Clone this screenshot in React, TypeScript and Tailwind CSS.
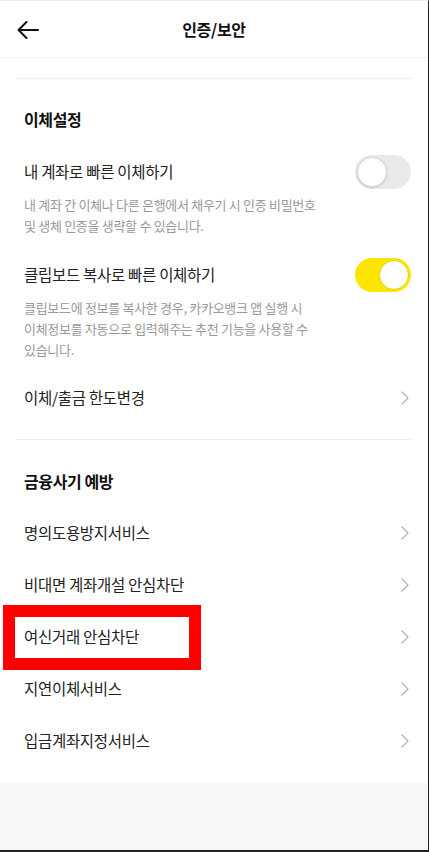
import React, { useState } from 'react';

const font = { fontFamily: '"Noto Sans CJK KR", "Noto Sans", sans-serif' };

function Toggle({ on, onChange }: { on: boolean; onChange: () => void }) {
  return (
    <button
      onClick={onChange}
      className={`relative w-[56px] h-[34px] rounded-full shrink-0 transition-colors ${
        on ? 'bg-[#fee500]' : 'bg-[#e9e9e9]'
      }`}
    >
      <span
        className={`absolute top-[2px] w-[30px] h-[30px] rounded-full bg-white border transition-all ${
          on ? 'left-[24px] border-[#e8cf00]' : 'left-[2px] border-[#d8d8d8] shadow-[0_1px_2px_rgba(0,0,0,0.15)]'
        }`}
      />
    </button>
  );
}

function Chevron() {
  return (
    <svg width="8" height="14" viewBox="0 0 8 14" fill="none" className="shrink-0">
      <path d="M1 1l6 6-6 6" stroke="#b4b4b4" strokeWidth="1.3" strokeLinecap="round" strokeLinejoin="round" />
    </svg>
  );
}

function LinkRow({ label, boxed }: { label: string; boxed?: boolean }) {
  return (
    <div className="relative h-[52px] flex items-center justify-between pl-6 pr-[19px]">
      {boxed && (
        <div className="absolute left-[3px] -top-[6px] w-[198px] h-[65px] border-[12px] border-[#ff0000]" />
      )}
      <span className="text-[15.5px] text-[#222] tracking-[-0.3px]">{label}</span>
      <Chevron />
    </div>
  );
}

export default function App() {
  const [fastMine, setFastMine] = useState(false);
  const [clipboard, setClipboard] = useState(true);

  return (
    <div style={font} className="w-[429px] h-[852px] bg-white flex flex-col border-r border-[#222] border-b-2 border-t border-t-[#eeeeee] overflow-hidden">
      {/* header */}
      <div className="h-[57px] shrink-0 relative flex items-center justify-center border-b border-[#f2f2f2]">
        <svg width="22" height="18" viewBox="0 0 22 18" fill="none" className="absolute left-[17px] top-[20px]">
          <path d="M21 9H1.5M9.5 1L1.5 9l8 8" stroke="#111" strokeWidth="2" strokeLinecap="round" strokeLinejoin="round" />
        </svg>
        <h1 className="text-[16px] font-bold text-[#111] tracking-[-0.3px]">인증/보안</h1>
      </div>

      <div className="flex-1 flex flex-col">
        <div className="h-[20px]" />
        <div className="mx-4 border-t border-[#eeeeee]" />

        {/* 이체설정 */}
        <div className="pt-[28px] pb-[24px] px-6">
          <h2 className="text-[16px] font-bold text-[#111] tracking-[-0.4px]">이체설정</h2>
        </div>

        <div className="pl-6 pr-[17px]">
          <div className="flex items-center justify-between">
            <span className="text-[15.5px] text-[#222] tracking-[-0.3px]">내 계좌로 빠른 이체하기</span>
            <Toggle on={fastMine} onChange={() => setFastMine(!fastMine)} />
          </div>
          <p className="mt-[5px] text-[13px] leading-[21px] text-[#999] tracking-[-0.3px] w-[292px]">
            내 계좌 간 이체나 다른 은행에서 채우기 시 인증 비밀번호 및 생체 인증을 생략할 수 있습니다.
          </p>
        </div>

        <div className="pl-6 pr-[17px] mt-[22px]">
          <div className="flex items-center justify-between">
            <span className="text-[15.5px] text-[#222] tracking-[-0.3px]">클립보드 복사로 빠른 이체하기</span>
            <Toggle on={clipboard} onChange={() => setClipboard(!clipboard)} />
          </div>
          <p className="mt-[5px] text-[13px] leading-[21px] text-[#999] tracking-[-0.3px] w-[292px]">
            클립보드에 정보를 복사한 경우, 카카오뱅크 앱 실행 시 이체정보를 자동으로 입력해주는 추천 기능을 사용할 수 있습니다.
          </p>
        </div>

        <div className="mt-[12px]">
          <LinkRow label="이체/출금 한도변경" />
        </div>

        <div className="mt-[15px] mx-4 border-t border-[#eeeeee]" />

        {/* 금융사기 예방 */}
        <div className="pt-[29px] pb-[14px] px-6">
          <h2 className="text-[16px] font-bold text-[#111] tracking-[-0.4px]">금융사기 예방</h2>
        </div>

        <LinkRow label="명의도용방지서비스" />
        <LinkRow label="비대면 계좌개설 안심차단" />
        <LinkRow label="여신거래 안심차단" boxed />
        <LinkRow label="지연이체서비스" />
        <LinkRow label="입금계좌지정서비스" />

        <div className="h-[16px]" />
        <div className="flex-1 bg-[#f7f7f7]" />
      </div>
    </div>
  );
}
